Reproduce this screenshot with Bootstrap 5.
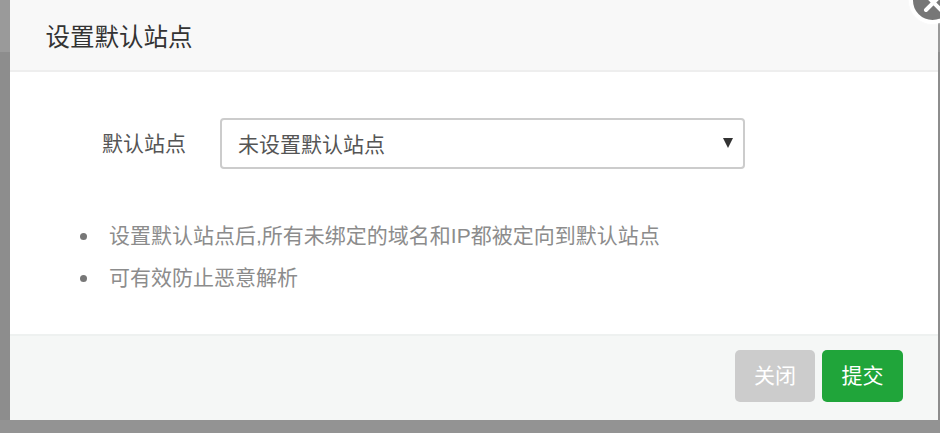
<!DOCTYPE html>
<html lang="zh-CN">
<head>
<meta charset="utf-8">
<title>设置默认站点</title>
<link href="https://cdn.jsdelivr.net/npm/bootstrap@5.3.0/dist/css/bootstrap.min.css" rel="stylesheet">
<style>
html,body{height:433px;overflow:hidden}
body{background:linear-gradient(#9a9a9a 0 52px,#8d8d8d 52px 420px,#939393 420px);font-family:"Liberation Sans","Noto Sans CJK SC",sans-serif;padding:0 2px 13px 10px}
.dlg{position:relative;height:420px;background:#fff;display:flex;flex-direction:column}
.dlg-head{height:72px;background:#f8f8f8;border-bottom:2px solid #eee;padding:0 35.5px;font-size:24.5px;line-height:76px;color:#333}
.dlg-body{flex:1;padding:46px 0 0 0}
.field-label{width:210px;margin:0;padding-right:34px;text-align:right;font-size:21px;color:#555}
.fake-select{width:525px;height:51px;border:2px solid #ccc;border-radius:4px;padding:2px 16px 0;font-size:21px;color:#555;position:relative}
.arrow{width:0;height:0;border-left:5px solid transparent;border-right:5px solid transparent;border-top:10px solid #333;position:absolute;right:10px;top:18px}
.tips{margin:46px 0 0;padding:0 0 0 99px;font-size:21px;line-height:42px;color:#8c8c8c;list-style:none}
.tips li{position:relative}
.tips li::before{content:"";position:absolute;left:-29.5px;top:17.5px;width:7px;height:7px;border-radius:50%;background:#777}
.dlg-foot{height:86px;background:#f5f7f6;border-top:2px solid #eef1f0;padding:14px 35px 0 0;gap:7px}
.act{width:80px;height:52px;border:0;border-radius:5px;color:#fff;font-size:21px;padding:0}
.act-off{background:#ccc}
.act-ok{background:#20a53a;width:81px}
.x-btn{position:absolute;right:-17.5px;top:-23.5px;width:47px;height:47px;border-radius:50%;background:#777;border:4px solid #fff;box-shadow:0 0 2px #fff}
.x-btn svg{display:block}
</style>
</head>
<body>
<div class="dlg">
<div class="dlg-head">设置默认站点</div>
<div class="dlg-body">
<div class="d-flex align-items-center">
<label class="field-label">默认站点</label>
<div class="fake-select d-flex align-items-center">未设置默认站点<span class="arrow"></span></div>
</div>
<ul class="tips">
<li>设置默认站点后,所有未绑定的域名和IP都被定向到默认站点</li>
<li>可有效防止恶意解析</li>
</ul>
</div>
<div class="dlg-foot d-flex justify-content-end align-items-start">
<button class="act act-off" type="button">关闭</button>
<button class="act act-ok" type="button">提交</button>
</div>
<span class="x-btn"><svg viewBox="0 0 39 39" width="39" height="39"><path d="M13 14L28 29M28 14L13 29" stroke="#fff" stroke-width="4" stroke-linecap="round"/></svg></span>
</div>
<script src="https://cdn.jsdelivr.net/npm/bootstrap@5.3.0/dist/js/bootstrap.bundle.min.js"></script>
</body>
</html>
